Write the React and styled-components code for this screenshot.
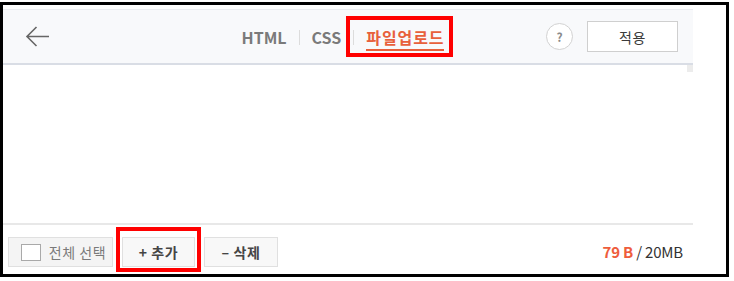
import React from "react";
import styled, { createGlobalStyle } from "styled-components";

const GlobalStyle = createGlobalStyle`
    body {
        margin: 0;
        background: #fff;
        font-family: "Noto Sans CJK KR", "Noto Sans", sans-serif;
    }
`;

const Frame = styled.div`
    margin-top: 2px;
    width: 729px;
    height: 275px;
    box-sizing: border-box;
    border: 3px solid #000;
    display: flex;
    flex-direction: column;
`;

const Panel = styled.div`
    width: 690px;
    margin-top: 4px;
    flex: 1;
    display: flex;
    flex-direction: column;
`;

const Header = styled.div`
    height: 56px;
    box-sizing: border-box;
    border-top: 1px solid #eceef2;
    border-bottom: 2px solid #d9dde5;
    background: #f8f9fb;
    display: grid;
    grid-template-columns: 1fr auto 1fr;
    align-items: center;
`;

const BackButton = styled.button`
    justify-self: start;
    margin-left: 22px;
    padding: 0;
    border: none;
    background: none;
    display: flex;
    cursor: pointer;
`;

const Tabs = styled.nav`
    display: flex;
    align-items: center;
    margin-right: 10px;
    margin-top: 2px;
`;

const Tab = styled.span`
    font-size: 16px;
    font-weight: 700;
    line-height: 20px;
    letter-spacing: ${(p) => (p.$active ? "0.9px" : "0")};
    color: ${(p) => (p.$active ? "#e8603c" : "#7a7a7a")};
    padding: 3px 0 2px;
    border-bottom: 2px solid ${(p) => (p.$active ? "#e8603c" : "transparent")};
    cursor: pointer;
`;

const Divider = styled.span`
    width: 1px;
    height: 15px;
    background: #dcdcdc;
    margin: ${(p) => p.$margin || "0 12px"};
`;

// 빨간 표시 박스 (레이아웃에 영향 없게 음수 마진으로 상쇄)
const Highlight = styled.span`
    display: inline-flex;
    align-items: center;
    padding: ${(p) => p.$pad};
    margin: ${(p) => p.$margin};
    outline: 4px solid #ff0000;
`;

const RightGroup = styled.div`
    justify-self: end;
    margin-right: 15px;
    display: flex;
    align-items: center;
    gap: 14px;
`;

const HelpButton = styled.button`
    width: 27px;
    height: 27px;
    border-radius: 50%;
    border: 1px solid #d2d2d2;
    background: #fff;
    color: #8a8a8a;
    font-size: 12px;
    font-weight: 700;
    font-family: inherit;
    padding: 0;
    cursor: pointer;
`;

const ApplyButton = styled.button`
    width: 91px;
    height: 31px;
    border: 1px solid #cfcfcf;
    background: #fff;
    color: #3a3a3a;
    font-size: 14px;
    letter-spacing: 0.5px;
    font-family: inherit;
    cursor: pointer;
`;

const Content = styled.div`
    flex: 1;
    background: #fff;
    display: flex;
    justify-content: flex-end;
    align-items: flex-start;
`;

const ScrollThumb = styled.div`
    width: 6px;
    height: 7px;
    background: #ececec;
`;

const Footer = styled.div`
    height: 51px;
    box-sizing: border-box;
    border-top: 2px solid #e8e8e8;
    display: flex;
    align-items: flex-start;
    padding: 12px 10px 0 5px;
`;

const ButtonRow = styled.div`
    display: flex;
    gap: 9px;
`;

const FooterButton = styled.button`
    height: 30px;
    box-sizing: border-box;
    width: ${(p) => p.$width}px;
    border: 1px solid #e0e0e0;
    background: ${(p) => (p.$muted ? "#f4f4f4" : "#f8f8f8")};
    color: ${(p) => (p.$muted ? "#7a7a7a" : "#454545")};
    font-size: 14px;
    letter-spacing: 0.6px;
    font-weight: ${(p) => (p.$muted ? 400 : 700)};
    font-family: inherit;
    display: flex;
    align-items: center;
    justify-content: center;
    gap: 8px;
    padding: 0;
    cursor: pointer;
`;

const CheckBox = styled.span`
    width: 18px;
    height: 15px;
    margin-left: 6px;
    border: 1px solid #a9a9a9;
    background: #fff;
`;

const SizeInfo = styled.div`
    margin-left: auto;
    margin-top: 4px;
    font-size: 15px;
    letter-spacing: -0.2px;
    color: #333;
`;

const Used = styled.span`
    color: #ee5d3c;
    font-weight: 700;
`;

const BackArrow = () => (
    <svg width="25" height="21" viewBox="0 0 25 21" fill="none">
        <path d="M24 10.5H2M11.5 1L2 10.5l9.5 9.5" stroke="#666" strokeWidth="1.6" />
    </svg>
);

export default function App() {
    return (
        <>
            <GlobalStyle />
            <Frame>
                <Panel>
                    <Header>
                        <BackButton aria-label="뒤로">
                            <BackArrow />
                        </BackButton>
                        <Tabs>
                            <Tab>HTML</Tab>
                            <Divider />
                            <Tab>CSS</Tab>
                            <Highlight $pad="4px 5px 2px 3px" $margin="-4px -5px -2px 9px">
                                <Divider $margin="0 12px 0 0" />
                                <Tab $active>파일업로드</Tab>
                            </Highlight>
                        </Tabs>
                        <RightGroup>
                            <HelpButton>?</HelpButton>
                            <ApplyButton>적용</ApplyButton>
                        </RightGroup>
                    </Header>
                    <Content>
                        <ScrollThumb />
                    </Content>
                    <Footer>
                        <ButtonRow>
                            <FooterButton $width={105} $muted>
                                <CheckBox />
                                전체 선택
                            </FooterButton>
                            <Highlight $pad="6px 2px 1px" $margin="-6px -2px -1px">
                                <FooterButton $width={73}>+ 추가</FooterButton>
                            </Highlight>
                            <FooterButton $width={74}>– 삭제</FooterButton>
                        </ButtonRow>
                        <SizeInfo>
                            <Used>79 B</Used> / 20MB
                        </SizeInfo>
                    </Footer>
                </Panel>
            </Frame>
        </>
    );
}
